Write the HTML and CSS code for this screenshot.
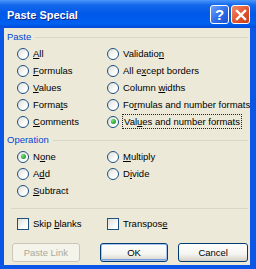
FILE: index.html
```html
<!DOCTYPE html>
<html lang="en">
<head>
	<meta charset="UTF-8">
	<title>Paste Special</title>
	<link rel="stylesheet" href="styles.css">
</head>
<body>
	<div class="window">
		<div class="titlebar">
			<span class="title">Paste Special</span>
			<span class="tbtn help">?</span>
			<span class="tbtn close">
				<svg width="12" height="12" viewBox="0 0 12 12"><path d="M2 2 L10 10 M10 2 L2 10" stroke="#fff" stroke-width="2.4" stroke-linecap="square"/></svg>
			</span>
		</div>
		<div class="content">
			<div class="legend"><span>Paste</span><i></i></div>
			<div class="options">
				<label class="opt"><span class="radio"></span><span><u>A</u>ll</span></label>
				<label class="opt"><span class="radio"></span><span>Validatio<u>n</u></span></label>
				<label class="opt"><span class="radio"></span><span><u>F</u>ormulas</span></label>
				<label class="opt"><span class="radio"></span><span>All e<u>x</u>cept borders</span></label>
				<label class="opt"><span class="radio"></span><span><u>V</u>alues</span></label>
				<label class="opt"><span class="radio"></span><span>Column <u>w</u>idths</span></label>
				<label class="opt"><span class="radio"></span><span>Forma<u>t</u>s</span></label>
				<label class="opt"><span class="radio"></span><span>Fo<u>r</u>mulas and number formats</span></label>
				<label class="opt"><span class="radio"></span><span><u>C</u>omments</span></label>
				<label class="opt"><span class="radio on"></span><span class="focus">Val<u>u</u>es and number formats</span></label>
			</div>

			<div class="legend op"><span>Operation</span><i></i></div>
			<div class="options">
				<label class="opt"><span class="radio on"></span><span>N<u>o</u>ne</span></label>
				<label class="opt"><span class="radio"></span><span><u>M</u>ultiply</span></label>
				<label class="opt"><span class="radio"></span><span>A<u>d</u>d</span></label>
				<label class="opt"><span class="radio"></span><span>D<u>i</u>vide</span></label>
				<label class="opt"><span class="radio"></span><span><u>S</u>ubtract</span></label>
			</div>

			<div class="sep"></div>
			<div class="options checks">
				<label class="opt"><span class="check"></span><span>Skip <u>b</u>lanks</span></label>
				<label class="opt"><span class="check"></span><span>Transpos<u>e</u></span></label>
			</div>

			<div class="buttons">
				<button class="btn disabled">Paste Link</button>
				<button class="btn default">OK</button>
				<button class="btn cancel">Cancel</button>
			</div>
		</div>
	</div>
</body>
</html>
```

FILE: styles.css
```css
body {
	margin: 0;
	background: #fff;
}
.window {
	width: 256px;
	height: 269px;
	box-sizing: border-box;
	background: #0a56e6;
	padding: 0 6px 4px 4px;
	display: flex;
	flex-direction: column;
	font-family: "Liberation Sans", Arial, sans-serif;
	font-size: 9.5px;
	color: #000;
}
.titlebar {
	height: 28px;
	display: flex;
	align-items: center;
	margin: 0 -6px 0 -4px;
	padding: 0 6px 0 7px;
	background: linear-gradient(#4a96fa 0%, #1468ec 18%, #0058e8 50%, #0060f0 85%, #0349d8 100%);
}
.title {
	flex: 1;
	color: #fff;
	font-weight: bold;
	font-size: 11px;
	text-shadow: 1px 1px 0 #0a2a8a;
	padding-top: 2px;
}
.tbtn {
	width: 17px;
	height: 17px;
	border: 1px solid #fff;
	border-radius: 3px;
	display: flex;
	align-items: center;
	justify-content: center;
	margin-top: 1px;
}
.help {
	background: linear-gradient(135deg, #6aa0fb, #2a68e8 60%, #1d52d0);
	color: #fff;
	font-weight: bold;
	font-size: 15px;
	margin-right: 2px;
}
.close {
	background: linear-gradient(135deg, #f08a6a, #e2542c 55%, #c63d1a);
}
.content {
	flex: 1;
	background: #ece9d8;
	padding: 3px 2px 0 3px;
	display: flex;
	flex-direction: column;
}
.legend {
	height: 12px;
	display: flex;
	align-items: center;
	color: #0046d5;
	line-height: 12px;
}
.legend i {
	flex: 1;
	height: 1px;
	background: #d8d6c6;
	margin-left: 4px;
}
.legend.op {
	margin-top: 4px;
}
.options {
	display: grid;
	grid-template-columns: 90px 1fr;
	grid-auto-rows: 17px;
	padding-left: 10px;
	margin-top: 2px;
}
.opt {
	display: flex;
	align-items: center;
	gap: 4px;
	white-space: nowrap;
}
.radio {
	width: 10px;
	height: 10px;
	border: 1px solid #1c5180;
	border-radius: 50%;
	background: linear-gradient(135deg, #dcdcd7, #fff 70%);
	display: flex;
	align-items: center;
	justify-content: center;
	flex: none;
}
.radio.on::after {
	content: "";
	width: 5px;
	height: 5px;
	border-radius: 50%;
	background: radial-gradient(circle at 35% 35%, #7be07a, #21a121 70%);
}
.check {
	width: 10px;
	height: 10px;
	border: 1px solid #1c5180;
	background: linear-gradient(135deg, #dcdcd7, #fff 75%);
	flex: none;
}
.focus {
	outline: 1px dotted #222;
	padding: 1px 1px;
	line-height: 11px;
}
.sep {
	height: 1px;
	background: #d8d6c6;
	margin: 9px 0 6px 4px;
}
.checks {
	margin-top: 0;
}
.buttons {
	display: flex;
	gap: 10px;
	margin-top: 11px;
	padding-left: 5px;
}
.btn {
	width: 69px;
	height: 19px;
	font-family: "Liberation Sans", Arial, sans-serif;
	font-size: 9.5px;
	border: 1px solid #003c74;
	border-radius: 3px;
	background: linear-gradient(#fff, #f4f4f0 60%, #d6d0c5);
	color: #000;
	padding: 0;
}
.btn.disabled {
	width: 68px;
	border-color: #c9c7ba;
	background: #f5f4ea;
	color: #aca899;
	margin-right: 10px;
}
.btn.cancel {
	width: 70px;
}
.btn.default {
	box-shadow: inset 0 0 0 1px #a8c4ee, inset 0 -1px 0 1px #7aa0e0;
}
```
